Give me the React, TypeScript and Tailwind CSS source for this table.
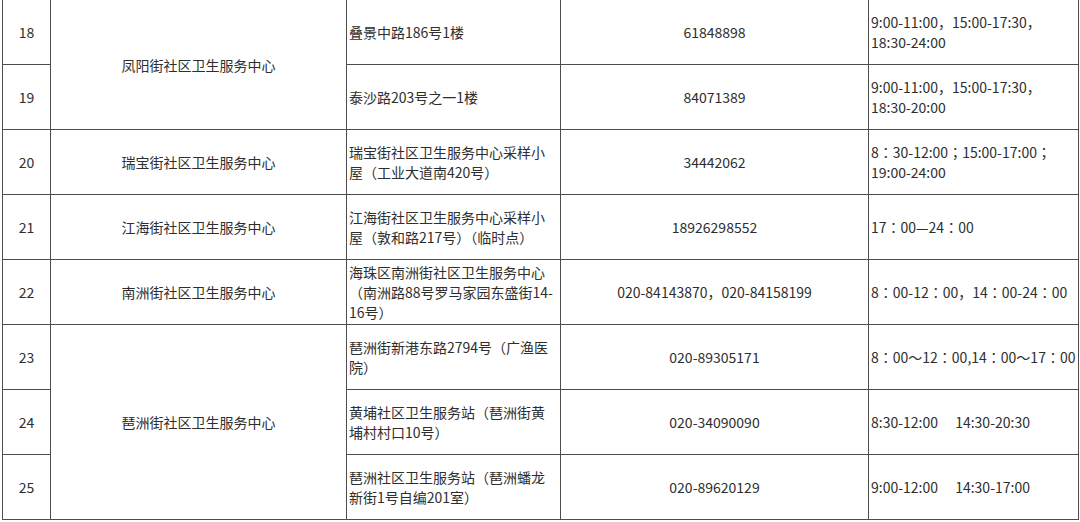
import React from 'react';

type Row = {
  no: number;
  center?: { name: string; span: number };
  address: string[];
  phone: string;
  hours: string[];
};

const rows: Row[] = [
  {
    no: 18,
    center: { name: '凤阳街社区卫生服务中心', span: 2 },
    address: ['叠景中路186号1楼'],
    phone: '61848898',
    hours: ['9:00-11:00，15:00-17:30，', '18:30-24:00'],
  },
  {
    no: 19,
    address: ['泰沙路203号之一1楼'],
    phone: '84071389',
    hours: ['9:00-11:00，15:00-17:30，', '18:30-20:00'],
  },
  {
    no: 20,
    center: { name: '瑞宝街社区卫生服务中心', span: 1 },
    address: ['瑞宝街社区卫生服务中心采样小', '屋（工业大道南420号）'],
    phone: '34442062',
    hours: ['8：30-12:00；15:00-17:00；', '19:00-24:00'],
  },
  {
    no: 21,
    center: { name: '江海街社区卫生服务中心', span: 1 },
    address: ['江海街社区卫生服务中心采样小', '屋（敦和路217号）（临时点）'],
    phone: '18926298552',
    hours: ['17：00—24：00'],
  },
  {
    no: 22,
    center: { name: '南洲街社区卫生服务中心', span: 1 },
    address: ['海珠区南洲街社区卫生服务中心', '（南洲路88号罗马家园东盛街14-', '16号）'],
    phone: '020-84143870，020-84158199',
    hours: ['8：00-12：00，14：00-24：00'],
  },
  {
    no: 23,
    center: { name: '琶洲街社区卫生服务中心', span: 3 },
    address: ['琶洲街新港东路2794号（广渔医', '院）'],
    phone: '020-89305171',
    hours: ['8：00～12：00,14：00～17：00'],
  },
  {
    no: 24,
    address: ['黄埔社区卫生服务站（琶洲街黄', '埔村村口10号）'],
    phone: '020-34090090',
    hours: ['8:30-12:00\u3000 14:30-20:30'],
  },
  {
    no: 25,
    address: ['琶洲社区卫生服务站（琶洲蟠龙', '新街1号自编201室）'],
    phone: '020-89620129',
    hours: ['9:00-12:00\u3000 14:30-17:00'],
  },
];

const cell = 'border border-[#4d4d4d] align-middle overflow-hidden';

const Lines = ({ lines }: { lines: string[] }) => (
  <>
    {lines.map((l, i) => (
      <div key={i} className="whitespace-pre">
        {l}
      </div>
    ))}
  </>
);

const App = () => {
  return (
    <div className="w-[1080px] h-[522px] bg-white overflow-hidden">
      <table className="table-fixed border-collapse w-[1077px] ml-[2px] -mt-px text-[14px] leading-[20px] text-[#2e2e2e] font-['Noto_Sans_CJK_SC','Microsoft_YaHei',sans-serif]">
        <colgroup>
          <col className="w-[48px]" />
          <col className="w-[296px]" />
          <col className="w-[214px]" />
          <col className="w-[308px]" />
          <col className="w-[210px]" />
        </colgroup>
        <tbody>
          {rows.map((r) => (
            <tr key={r.no} className="h-[65px]">
              <td className={`${cell} text-center`}>{r.no}</td>
              {r.center && (
                <td className={`${cell} text-center`} rowSpan={r.center.span}>
                  {r.center.name}
                </td>
              )}
              <td className={`${cell} px-[2px]`}>
                <Lines lines={r.address} />
              </td>
              {/* KR cut keeps full-width colons centred like the source sheet */}
              <td className={`${cell} text-center font-['Noto_Sans_CJK_KR',sans-serif]`}>{r.phone}</td>
              <td className={`${cell} pl-[2px] font-['Noto_Sans_CJK_KR',sans-serif]`}>
                <Lines lines={r.hours} />
              </td>
            </tr>
          ))}
        </tbody>
      </table>
    </div>
  );
};

export default App;
